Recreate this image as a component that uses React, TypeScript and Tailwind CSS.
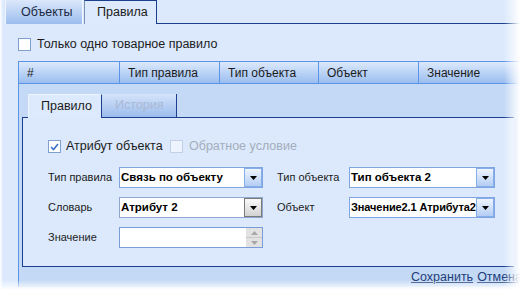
import React from "react";

const font = { fontFamily: '"Liberation Sans", Arial, sans-serif' };

function Arrow({ color = "#000" }: { color?: string }) {
  return (
    <svg width="7" height="4" viewBox="0 0 7 4">
      <path d="M0 0 H7 L3.5 4 Z" fill={color} />
    </svg>
  );
}

function Combo({ text, width, gray, small }: { text: string; width: number; gray?: boolean; small?: boolean }) {
  return (
    <div
      className={`flex h-[21px] border ${gray ? "border-[#8fa7cc]" : "border-[#7fa5e2]"} bg-white`}
      style={{ width }}
    >
      <div
        className={`mr-[-6px] min-w-0 flex-1 overflow-hidden whitespace-nowrap pl-[1px] ${small ? "text-[11px] tracking-[-0.1px]" : "text-[11.5px]"} font-bold leading-[19px] text-black`}
      >
        {text}
      </div>
      {gray ? (
        <div className="relative z-10 flex w-[18px] items-center justify-center border border-[#7a7a7a] bg-gradient-to-b from-[#fafafa] to-[#d2d2d2]">
          <Arrow />
        </div>
      ) : (
        <div className="relative z-10 flex w-[18px] items-center justify-center border border-[#86aee8] bg-gradient-to-b from-[#eef4fd] to-[#b4cdf3]">
          <Arrow />
        </div>
      )}
    </div>
  );
}

export default function App() {
  return (
    <div className="relative h-[290px] w-[520px] overflow-hidden bg-[#dce9fc] text-[#1b1b1b]" style={font}>
      {/* top tab strip */}
      <div className="flex h-[24px] items-stretch">
        <div className="w-[5px]" />
        <div className="flex w-[78px] items-center border-l border-r border-l-[#eef4fd] border-r-[#f4f8ff] bg-gradient-to-b from-[#dce8fb] to-[#9cbcee] pl-[15px] text-[12.5px] text-[#1b2a44]">
          Объекты
        </div>
        <div className="w-[1px]" />
        <div className="flex w-[73px] items-center border-l border-r border-t border-l-[#7a90b8] border-r-[#1b3f8c] border-t-[#1b3f8c] bg-[#dde9fc] pl-[12px] text-[12.5px] text-[#1b1b1b]">
          Правила
        </div>
        <div className="flex-1 border-b border-[#1b3f8c]" />
      </div>

      {/* content */}
      <div className="pl-[18px] pt-[14px]">
        <div className="flex h-[13px] items-center">
          <div className="h-[13px] w-[13px] border border-[#7f9fcf] bg-white" />
          <span className="ml-[6px] text-[12.5px] leading-[13px]">Только одно товарное правило</span>
        </div>

        {/* grid */}
        <div className="mt-[10px] w-[520px] border-l border-t border-[#5b95e8] bg-[#c4d9f6]">
          <div className="flex h-[22px] border-b border-[#5b95e8] bg-gradient-to-b from-[#dce9fc] to-[#9bbeef] text-[12px]">
            {[
              ["#", 101],
              ["Тип правила", 100],
              ["Тип объекта", 99],
              ["Объект", 100],
              ["Значение", 110],
            ].map(([t, w], i) => (
              <div
                key={i}
                className="flex items-center border-r border-[#5b95e8] pl-[8px]"
                style={{ width: w as number }}
              >
                {t}
              </div>
            ))}
          </div>

          {/* detail area */}
          <div className="pl-[3px] pt-[10px]">
            <div className="flex h-[24px] items-stretch">
              <div className="w-[6px] border-b border-[#1b3f8c]" />
              <div className="flex w-[74px] items-center border-l border-r border-t border-l-[#eef4fd] border-r-[#1b3f8c] border-t-[#eef4fd] bg-[#dde9fc] pl-[12px] text-[12.5px]">
                Правило
              </div>
              <div className="flex w-[75px] items-center border-b border-r border-b-[#1b3f8c] border-r-[#1b3f8c] bg-gradient-to-b from-[#d4e3fa] to-[#9cbcee] pl-[13px] text-[12.5px] text-[#a9b9d3]">
                История
              </div>
              <div className="w-[337px] border-b border-[#1b3f8c]" />
            </div>
            <div className="h-[149px] w-[492px] border-b border-l border-[#1b3f8c] bg-[#dce9fc] pl-[25px] pt-[22px]">
              <div className="flex h-[13px] items-center">
                <div className="flex h-[13px] w-[13px] items-center justify-center border border-[#7f9fcf] bg-white">
                  <svg width="9" height="8" viewBox="0 0 9 8">
                    <path d="M1 4 L3.5 6.5 L8 1" stroke="#3a6fd0" strokeWidth="1.6" fill="none" />
                  </svg>
                </div>
                <span className="ml-[5px] w-[104px] whitespace-nowrap text-[12.5px] leading-[13px]">Атрибут объекта</span>
                <div className="h-[13px] w-[13px] border border-[#c2d0e6] bg-[#eef4fd]" />
                <span className="ml-[6px] whitespace-nowrap text-[12.5px] leading-[13px] text-[#a3adbb]">Обратное условие</span>
              </div>

              <div className="mt-[14px] flex h-[21px] items-center">
                <div className="w-[71px] text-[11px]">Тип правила</div>
                <Combo text="Связь по объекту" width={144} />
                <div className="ml-[14px] w-[72px] text-[11px]">Тип объекта</div>
                <Combo text="Тип объекта 2" width={146} />
              </div>

              <div className="mt-[9px] flex h-[21px] items-center">
                <div className="w-[71px] text-[11px]">Словарь</div>
                <Combo text="Атрибут 2" width={144} gray />
                <div className="ml-[14px] w-[72px] text-[11px]">Объект</div>
                <Combo text="Значение2.1 Атрибута2" width={146} small />
              </div>

              <div className="mt-[9px] flex h-[21px] items-center">
                <div className="w-[71px] text-[11px]">Значение</div>
                <div className="flex h-[21px] w-[144px] border border-[#7a9dd9] bg-white">
                  <div className="flex-1" />
                  <div className="flex w-[16px] flex-col">
                    <div className="flex flex-1 items-center justify-center border-b border-[#c8c8c8] bg-[#e2e2e2]">
                      <svg width="7" height="4" viewBox="0 0 7 4">
                        <path d="M0 4 H7 L3.5 0 Z" fill="#a8a8a8" />
                      </svg>
                    </div>
                    <div className="flex flex-1 items-center justify-center bg-[#e2e2e2]">
                      <Arrow color="#a8a8a8" />
                    </div>
                  </div>
                </div>
              </div>
            </div>
          </div>

          <div className="flex h-[20px] items-end gap-[4px] pl-[392px] text-[12.5px] text-[#1c3c78]">
            <span className="underline">Сохранить</span>
            <span className="underline">Отмена</span>
          </div>
        </div>
      </div>

      {/* soft edge fades */}
      <div className="pointer-events-none absolute right-0 top-0 h-full w-[16px] bg-gradient-to-r from-transparent to-white" />
      <div className="pointer-events-none absolute bottom-0 left-0 h-[10px] w-full bg-gradient-to-b from-transparent to-white" />
      <div className="pointer-events-none absolute left-0 top-0 h-full w-[3px] bg-gradient-to-l from-transparent to-white" />
    </div>
  );
}
